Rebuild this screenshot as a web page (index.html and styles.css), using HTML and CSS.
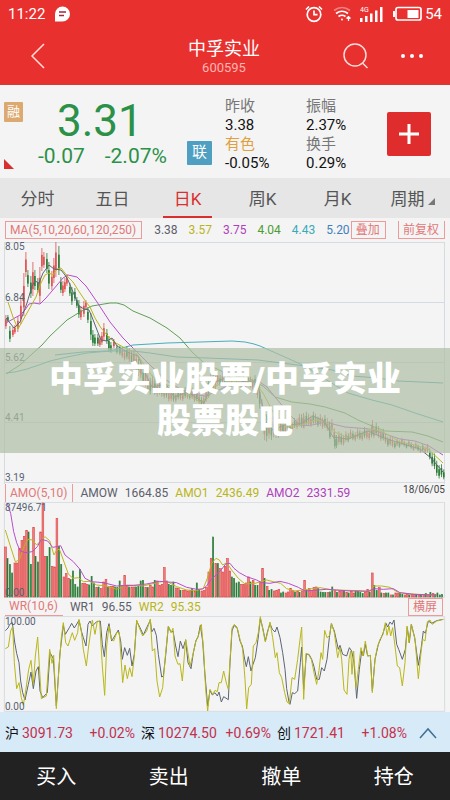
FILE: index.html
```html
<!DOCTYPE html>
<html lang="zh-CN">
<head>
<meta charset="utf-8">
<meta name="viewport" content="width=device-width, initial-scale=1">
<title>中孚实业 600595</title>
<link rel="stylesheet" href="styles.css">
</head>
<body>
<header class="top">
  <div class="status">
    <span>11:22</span>
    <svg class="chat" width="17" height="16" viewBox="0 0 17 16"><path d="M1 15.500V8A7.500 7.500 0 1 1 8.500 15.500Z" fill="#fff"/><path d="M5 6h7M5 9.500h5" stroke="#a02838" stroke-width="1.600"/></svg>
    <svg class="alarm" width="18" height="18" viewBox="0 0 18 18" fill="none" stroke="#fff" stroke-width="1.700"><circle cx="9" cy="9.500" r="6.800"/><path d="M9 5.500v4.200h3.500M1 4.500 4 1.500M17 4.500 14 1.500"/></svg>
    <svg class="wifi" width="19" height="16" viewBox="0 0 19 16" fill="none" stroke="#fff" stroke-width="1.700"><path d="M1 4.500Q9 -1.500 17 4.500" opacity=".4"/><path d="M3 7.500q6-4.500 12 0M5.500 10.500q3.500-2.500 7 0"/><circle cx="9" cy="13.500" r="1" fill="#fff" stroke="none"/><path d="M15.500 15v-4M13.500 12.500l2-2 2 2" stroke-width="1.200"/></svg>
    <svg class="signal" width="23" height="18" viewBox="0 0 23 18" fill="#fff"><path d="M0 13h2.500v4H0zM5 11h2.500v6H5zM10 8.500h2.500V17H10zM15 5.500h2.500V17H15zM20 2h2.500v15H20z"/><text x="0" y="7" font-size="7">4G</text></svg>
    <svg class="battery" width="29" height="16" viewBox="0 0 29 16"><rect x="3" y="1.500" width="25" height="12.500" rx="2" fill="none" stroke="#fff" stroke-width="1.700"/><path d="M0 5h2v6H0zM14.500 4h11v8h-11z" fill="#fff"/></svg>
    <span>54</span>
  </div>
  <nav class="nav">
    <button class="icon" aria-label="返回"><svg width="16" height="26" viewBox="0 0 16 26"><path d="M14 1 2 13l12 12"/></svg></button>
    <div class="title"><h1>中孚实业</h1><p>600595</p></div>
    <button class="icon" aria-label="搜索"><svg width="28" height="28" viewBox="0 0 28 28"><circle cx="13" cy="13" r="11"/><path d="m20.500 21 5 5"/></svg></button>
    <button class="icon" aria-label="更多"><svg width="24" height="6" viewBox="0 0 24 6"><g fill="#fff" stroke="none"><circle cx="3" cy="3" r="2"/><circle cx="12" cy="3" r="2"/><circle cx="21" cy="3" r="2"/></g></svg></button>
  </nav>
</header>

<section class="quote">
  <div class="marks"><span class="rong">融</span><i class="corner"></i></div>
  <div class="price"><strong>3.31</strong><div><span>-0.07</span><span>-2.07%</span></div></div>
  <span class="lian">联</span>
  <dl class="facts"><dt>昨收</dt><dd>3.38</dd><dt class="sector">有色</dt><dd>-0.05%</dd></dl>
  <dl class="facts"><dt>振幅</dt><dd>2.37%</dd><dt>换手</dt><dd>0.29%</dd></dl>
  <button class="add" aria-label="添加自选"><svg width="22" height="22" viewBox="0 0 22 22"><path d="M11 1v20M1 11h20" stroke="#fff" stroke-width="3"/></svg></button>
</section>

<nav class="tabs">
  <button>分时</button><button>五日</button><button class="active">日K</button><button>周K</button><button>月K</button><button>周期<i></i></button>
</nav>

<main>
  <div class="legend ma">
    <button class="tag">MA(5,10,20,60,120,250)</button>
    <div class="averages"><span>3.38</span><span class="yellow">3.57</span><span class="purple">3.75</span><span class="green">4.04</span><span class="cyan">4.43</span><span class="blue">5.20</span></div>
    <button class="tag">叠加</button>
    <button class="tag right open">前复权</button>
  </div>
  <div class="kline">
    <svg viewBox="0 242 450 242" fill="none">
      <path class="frame" d="M4.500 242.500H444.500M4.500 302.500H444.500M4.500 362.500H444.500M4.500 422.500H444.500M4.500 482.500H444.500M4.500 242V484M444.500 242V484"/>
      <g id="candles"></g>
      <path class="l-blue" d="M55 355 83 352 107 351 133 351 150 353 177 357 207 358 258 360 305 366 332 370 352 376 378 378 398 381 443 383"/>
      <path class="l-cyan" d="M6 373 15 372 27 369 39 365 50 361 67 357 87 353 110 351 122 348 133 345 167 343 200 342 232 341 245 342 254 344 260 346 278 354 305 366 325 379 348 393 372 400 392 405 415 413 443 422"/>
      <path class="l-green" d="M6 374 20 365 32 354 42 345 50 336 67 320 80 312 92 306 104 304 110 303 117 303 124 305 133 311 150 318 167 328 180 338 193 353 203 362 213 367 225 373 250 379 263 386 275 397 292 402 310 404 325 407 345 413 358 420 372 426 385 431 412 432 428 436 443 442"/>
      <path class="l-purple" d="M6 323 20 315 25 310 29 304 34 303 40 304 46 298 52 291 63 278 68 275 77 277 86 286 97 302 110 322 123 338 137 352 152 367 166 380 180 389 192 394 205 396 215 392 225 387 245 381 258 381 267 387 275 397 291 416 301 426 312 425 325 422 345 427 370 429 385 434 400 439 415 441 429 446 443 455"/>
      <path class="l-yellow" d="M8 302 13 317 18 329 27 313 36 297 41 283 45 275 49 273 53 275 57 269 61 268 68 277 73 282 78 290 82 296 86 302 90 307 95 318 101 328 107 335 114 342 125 348 137 354 145 366 152 376 160 382 180 390 200 402 208 398 215 386 230 381 253 381 263 393 272 410 280 423 287 427 302 425 315 420 326 422 335 432 348 438 360 435 372 429 383 432 400 442 415 445 428 449 443 463"/>
      <path class="l-dark" d="M6 318 14 328 20 322 27 303 32 286 35 281 39 283 43 273 49 265 54 269 61 270 65 275 68 280 73 292 79 306 84 309 89 310 92 317 97 330 101 340 107 341 112 338 117 346 127 352 138 356 146 375 152 387 166 384 174 397 188 392 204 403 213 383 228 377 245 382 257 382 263 408 272 430 285 425 300 424 313 416 324 421 333 437 348 439 368 431 384 438 400 443 420 449 431 458 443 472"/>
      <g class="scale"><text x="5" y="250">8.05</text><text x="5" y="301">6.84</text><text x="5" y="361">5.62</text><text x="5" y="421">4.41</text><text x="5" y="481">3.19</text></g>
    </svg>
    <div class="banner">中孚实业股票/中孚实业<br>股票股吧</div>
  </div>

  <div class="legend">
    <button class="tag sides">AMO(5,10)</button>
    <span>AMOW</span><span>1664.85</span><span class="yellow">AMO1</span><span class="yellow">2436.49</span><span class="purple">AMO2</span><span class="purple">2331.59</span>
    <time class="right">18/06/05</time>
  </div>
  <svg viewBox="0 66 1350 287" fill="none" class="triple">
    <path class="frame" d="M13 67H1334M13 67V352M1334 67V352M13 352H1334"/>
    <g id="volume"></g>
    <path class="l-yellow" d="M16 150 30 195 46 245 58 240 72 200 84 178 97 180 110 195 124 180 135 170 149 182 162 225 169 212 178 207 190 240 205 282 219 295 235 293 250 305 270 304 290 315 320 318 350 328 380 315 430 318 478 306 500 304 530 320 560 330 590 332 610 325 622 295 635 250 648 235 658 240 668 255 680 248 695 270 715 295 735 312 765 310 800 300 820 305 842 310 860 326 885 333 960 323 1000 330 1080 332 1110 334 1122 318 1145 318 1170 322 1195 338 1250 343 1310 345"/>
    <path class="l-purple" d="M22 70 32 100 41 155 50 188 60 212 75 218 97 215 112 200 124 178 143 183 158 202 170 200 182 197 195 225 220 245 240 268 255 295 275 305 310 308 350 318 400 316 440 312 478 304 530 308 560 322 590 328 608 327 620 318 632 300 650 283 665 268 677 252 690 250 702 265 718 278 740 290 770 300 785 308 810 310 840 304 865 310 895 322 915 333 980 328 1050 333 1105 334 1122 326 1150 328 1180 326 1200 338 1240 343 1310 345"/>
    <g class="scale"><text x="15" y="94">87496.71</text><text x="15" y="347">0.00</text></g>
  </svg>

  <div class="legend">
    <button class="tag under">WR(10,6)</button>
    <span>WR1</span><span>96.55</span><span class="yellow">WR2</span><span class="yellow">95.35</span>
    <button class="tag right shift">横屏</button>
  </div>
  <svg viewBox="0 60 1350 288" fill="none" class="triple">
    <path class="frame" d="M13 61H1334M13 61V346M1334 61V346M13 346H1334"/>
    <path class="l-dark" d="M16 104 24 96 29 85 37 80 44 138 50 172 57 200 62 255 68 290 75 312 85 265 93 228 100 278 108 225 115 212 120 285 128 305 142 290 150 170 160 188 169 330 180 170 190 88 196 115 208 95 215 82 223 96 237 73 244 105 250 125 258 150 264 85 270 75 277 90 290 77 301 75 307 145 313 182 320 110 327 83 335 135 355 102 362 135 367 190 374 155 382 178 389 157 396 210 403 175 410 75 420 95 430 117 440 95 451 73 455 108 462 97 469 118 475 175 485 243 490 240 497 178 505 92 513 108 519 105 527 150 534 182 541 135 549 158 557 132 564 200 573 218 580 170 588 133 594 123 601 88 608 135 614 225 623 330 630 283 637 297 645 290 652 300 657 288 664 318 671 302 685 311 690 200 696 105 702 88 712 98 720 135 727 150 734 190 739 212 745 182 753 225 759 205 766 185 774 130 781 68 788 95 796 135 803 105 810 83 817 100 825 108 831 93 840 125 848 170 855 220 860 278 867 318 870 325 877 290 884 293 893 285 901 200 905 153 911 280 919 175 927 175 935 190 942 212 950 250 958 250 965 215 973 225 981 190 988 125 994 83 1003 105 1015 160 1020 148 1028 175 1040 180 1048 155 1055 165 1062 200 1070 307 1078 220 1085 165 1090 180 1096 145 1103 180 1111 178 1117 285 1125 190 1135 145 1149 112 1158 82 1163 93 1170 78 1176 85 1182 72 1190 145 1196 160 1207 190 1216 160 1222 95 1228 140 1234 85 1244 125 1255 208 1263 160 1270 105 1276 112 1285 75 1295 82 1310 74 1330 70"/>
    <path class="l-yellow" d="M16 158 25 153 32 105 38 92 43 200 50 278 57 260 64 305 70 328 77 285 86 220 93 193 100 265 106 180 113 123 119 225 124 308 139 300 149 160 156 202 161 178 169 338 177 215 184 125 190 80 197 140 204 150 211 128 217 110 224 133 233 110 237 70 243 98 250 160 259 210 266 150 277 72 285 115 292 75 299 78 307 210 314 298 320 150 327 90 334 130 341 135 351 108 358 110 363 185 368 260 375 207 382 248 389 215 396 242 403 180 410 72 417 93 428 120 440 105 451 69 457 165 464 158 471 255 479 303 488 275 497 170 505 90 513 110 519 97 525 180 534 205 540 203 547 255 557 130 563 165 570 210 578 180 587 138 595 120 604 85 611 165 617 280 623 345 630 280 638 295 645 283 652 287 657 260 664 260 671 225 680 265 685 280 691 178 696 96 703 85 711 93 720 130 728 160 735 250 740 339 746 275 754 265 760 150 768 140 775 110 781 62 788 98 796 138 804 105 810 78 818 125 826 185 831 170 838 230 845 245 854 290 861 318 868 323 876 245 884 250 893 190 901 123 905 93 911 310 918 172 925 175 934 190 943 235 950 265 957 223 963 170 968 190 974 103 981 125 988 120 995 83 1003 110 1013 185 1020 155 1025 190 1032 282 1041 295 1047 190 1052 165 1056 235 1061 165 1068 275 1075 220 1083 155 1089 180 1096 135 1103 180 1111 178 1117 290 1125 190 1131 158 1140 130 1149 115 1156 80 1161 118 1167 90 1172 120 1178 95 1185 150 1192 210 1199 215 1207 270 1215 200 1221 90 1227 140 1234 85 1245 130 1255 248 1263 170 1268 130 1275 135 1282 78 1290 72 1297 85 1310 75 1330 70"/>
    <g class="scale"><text x="15" y="87">100.00</text><text x="15" y="341">0.00</text></g>
  </svg>
</main>

<footer>
  <div class="indices">
    <a href="#sh"><b>沪</b><span>3091.73</span><em>+0.02%</em></a>
    <a href="#sz"><b>深</b><span>10274.50</span><em>+0.69%</em></a>
    <a href="#cy"><b>创</b><span>1721.41</span><em>+1.08%</em></a>
    <button aria-label="展开"><svg width="18" height="12" viewBox="0 0 18 12"><path d="m1 11 8-9 8 9" fill="none" stroke="#3f7194" stroke-width="1.500"/></svg></button>
  </div>
  <div class="actions"><button>买入</button><button>卖出</button><button>撤单</button><button>持仓</button></div>
</footer>
<script src="charts.js"></script>
</body>
</html>
```
FILE: styles.css
```css
* { box-sizing: border-box; }
body {
  margin: 0;
  background: #f4f4f4;
  color: #5b606b;
  font-family: Roboto, "Noto Sans CJK SC", sans-serif;
  font-size: 12px;
}
button { margin: 0; padding: 0; border: 0; background: none; color: inherit; font: inherit; }
h1, p, dl, dd { margin: 0; font-weight: 400; }
i, em { font-style: normal; }
svg { display: block; }
a { color: inherit; text-decoration: none; }

.top { background: #e8302f; color: #fff; border-bottom: 1px solid #d4393b; }
.status { display: flex; align-items: center; height: 28px; padding: 0 8px; font-size: 15px; }
.chat { margin-left: 9px; }
.alarm { margin-left: auto; }
.wifi { margin-left: 10px; }
.signal { margin-left: 8px; }
.battery { margin: 0 3px 0 10px; }
.nav { display: grid; grid-template-columns: 76px 1fr 56px 56px; align-items: center; height: 56px; padding-right: 10px; }
.icon { display: grid; place-items: center; height: 56px; }
.icon svg { fill: none; stroke: #ffdcd8; stroke-width: 1.5; }
.title { padding: 2px 0 0 44px; text-align: center; }
.title h1 { font-size: 18px; line-height: 22px; }
.title p { font-size: 13px; line-height: 16px; color: #ffb5b0; }

.quote { display: flex; align-items: center; height: 93px; padding-left: 4px; }
.marks { display: flex; flex-direction: column; justify-content: space-between; width: 34px; height: 67px; margin-top: 8px; }
.rong { width: 19px; height: 20px; background: #dca970; color: #fff; font-size: 13px; line-height: 19px; text-align: center; border-radius: 1px; }
.corner { border-top: 10px solid transparent; border-left: 10px solid #d8302f; width: 0; }
.price { width: 149px; padding-top: 2px; color: #2b9148; }
.price strong { display: block; padding-left: 19px; font-size: 44px; font-weight: 400; line-height: 46px; }
.price div { display: flex; gap: 20px; font-size: 21px; line-height: 24px; }
.lian { width: 25px; height: 24px; margin: 42px 13px 0 0; background: #4f9fc2; color: #fff; font-size: 15px; line-height: 23px; text-align: center; border-radius: 1px; }
.facts { width: 81px; padding-top: 6px; font-size: 15px; line-height: 19px; }
.facts dt { color: #777; }
.facts .sector { color: #e0a040; }
.facts dd { color: #111; }
.add { display: grid; place-items: center; width: 44px; height: 44px; margin-top: 4px; border-radius: 2px; background: #df2d2d; }

.tabs { display: grid; grid-template-columns: repeat(6, 1fr); height: 40px; background: #e6e6e6; color: #555; font-size: 17px; }
.tabs button { position: relative; padding-bottom: 2px; }
.tabs .active { color: #d9302f; }
.tabs .active::after { content: ""; position: absolute; left: 13px; right: 13px; bottom: 0; height: 2px; background: #d9302f; }
.tabs i { display: inline-block; margin-left: 3px; border-top: 7px solid transparent; border-right: 7px solid #777; }

.legend { display: flex; align-items: center; gap: 7px; height: 18px; padding: 0 5px; white-space: nowrap; }
.ma { height: 24px; gap: 0; }
.averages { display: flex; gap: 11px; margin: 0 1px 0 12px; }
.tag { height: 18px; padding: 0 5px 0 4px; border: 1px solid #ee9a9a; color: #e27878; line-height: 16px; }
.open { border-top: 0; }
.sides { border-width: 0 1px; }
.under { border-width: 0 0 1px; }
.shift { margin-right: 2px; }
.right { margin-left: auto; }
time { align-self: flex-start; color: #444; font-size: 10px; line-height: 12px; }
.yellow { color: #b8b420; }
.purple { color: #ae3fbb; }
.green { color: #4c9c30; }
.cyan { color: #3aa9b9; }
.blue { color: #3f7fc0; }

.kline { position: relative; }
.frame { stroke: #d5dbe0; }
.scale { fill: #566273; font-size: 10px; }
.triple { stroke-width: 3; }
.triple .scale { font-size: 30px; stroke: none; }
.l-dark { stroke: #5c6674; }
.l-yellow { stroke: #b9b719; }
.l-purple { stroke: #b84dcc; }
.l-green { stroke: #5ea052; }
.l-cyan { stroke: #48aebc; }
.l-blue { stroke: #4ea1bb; }
.up { fill: #ef8080; stroke: #e04c4c; }
.down { fill: #287a35; stroke: #287a35; }
#volume { stroke-width: 2; }
#candles { stroke-width: 0; }
#candles .up { fill: #df5050; }
.banner {
  position: absolute; left: 0; right: 0; top: 44%; height: 43%;
  display: grid; align-content: center;
  background: rgba(174, 191, 164, .7); color: #fff;
  font-size: 34px; font-weight: 900; line-height: 42px; text-align: center;
}

.indices { display: flex; align-items: center; height: 40px; padding: 3px 0 0 5px; background: #d7eaf7; color: #c5304b; font-size: 14px; line-height: 20px; }
.indices a { display: flex; align-items: baseline; gap: 3px; width: 136px; padding-right: 6px; }
.indices b { color: #111; font-weight: 400; }
.indices em { margin-left: auto; }
.indices button { margin-left: 6px; }
.actions { display: grid; grid-template-columns: repeat(4, 1fr); height: 48px; background: #222; color: #fff; font-size: 20px; }
```
FILE: charts.js
```js
const NS = "http://www.w3.org/2000/svg";

function bar(parent, x, y, w, h, cls) {
  const r = document.createElementNS(NS, "rect");
  r.setAttribute("x", x);
  r.setAttribute("y", y);
  r.setAttribute("width", w);
  r.setAttribute("height", h);
  r.setAttribute("class", cls);
  parent.appendChild(r);
}

// Turnover per day: bar height, followed by g on falling days.
const turnover = `150 115g 97g 72g 102 102 145 170 182 200 195g 98g 208 122g 105g 195 282 122 122g 148g 92 90 236 152g 98g 60
70 55 52g 78g 38g 30g 82g 40 40 38 36g 62g 42g 28 30g 25 45 53 28g 32 32 30g 28g 48g 35 65 35 30g 30 30 30g 33g 48g 50g 28 28g 35
30 50g 48 35 38 88 48 38g 35g 45g 27 25 20g 20 20 18 20 25g 18 42g 22g 18 20 28 75 115 180g 100 100g 85 75 92 115
78 60g 55g 42g 45g 38 38 42 60 45g 50 35g 35g 45 85 56g 32 20g 22g 18 20 22 12g 15g 12 15 25 20 15g 16 14g 18 50
20g 25 20 28 30 25g 15g 14g 13g 13 15g 30g 20 14g 18 20 20g 14 12g 18 12 18g 18g 14g 10g 14 22 15g 72 35g 20g 28
12g 10 12g 12g 6 6g 12 10 10g 8g 6 7 6g 7 8 8g 6 5g 8 10g 6 14g 10 8g 12g 6g 7g`.split(/\s+/);
const volume = document.getElementById("volume");
const step = 1318 / turnover.length;
turnover.forEach((t, i) => {
  const h = parseInt(t, 10);
  const falling = t.endsWith("g");
  bar(volume, 14 + i * step, 351 - h, falling ? 3 : 5, h, falling ? "down" : "up");
});

// Daily range: x, high, low, rising (1) or falling (0).
const days = [
  [6,315,329,1],[8,315,322,0],[10,326,342,0],[13,327,337,1],[15,325,334,1],[18,316,332,1],[21,298,324,1],[24,273,316,1],
  [26,252,277,1],[28,270,287,0],[31,276,298,0],[33,262,296,1],[35,270,290,0],[38,278,293,0],[40,267,303,1],[42,248,271,1],
  [44,252,268,1],[47,253,273,0],[49,262,289,0],[52,271,290,1],[54,258,283,1],[56,242,277,1],[59,246,275,0],[61,277,293,0],
  [63,281,296,1],[65,278,292,1],[67,274,286,1],[70,283,296,0],[72,287,305,0],[75,288,301,0],[77,297,308,0],[79,300,318,0],
  [81,306,320,1],[84,301,317,1],[86,300,309,1],[88,307,323,0],[91,313,340,0],[93,330,346,0],[95,334,346,0],[98,334,346,0],
  [100,336,347,1],[102,332,345,1],[104,323,340,1],[107,329,344,0],[109,336,352,0],[111,342,353,0],[114,339,348,1],[117,345,354,0]
];
// Typical high and low later on, filled in day by day.
const range = [[120,348,357],[131,348,363],[138,355,373],[148,375,393],[165,384,397],[171,391,403],[181,390,400],[190,387,398],[204,397,408],
  [208,375,397],[218,373,385],[230,378,387],[243,377,386],[255,377,389],[260,383,408],[263,408,440],[275,420,439],[290,422,429],
  [303,414,428],[316,413,424],[332,421,434],[336,433,447],[350,432,441],[367,428,439],[377,425,437],[390,437,447],[405,441,447],
  [427,446,453],[433,452,467],[437,461,476],[441,465,478],[444,469,479]];
let k = 0;
for (let x = 120, n = 0; x < 444; x += 2.33, n++) {
  while (k < range.length - 2 && x > range[k + 1][0]) k++;
  const [a, b] = [range[k], range[k + 1]];
  const f = (x - a[0]) / (b[0] - a[0]);
  const wave = (n * 37 % 11) / 2 - 2.5;
  const high = a[1] + (b[1] - a[1]) * f + wave;
  const low = a[2] + (b[2] - a[2]) * f + wave * 0.7;
  days.push([x, high, low, x > 428 ? 0 : (n * 7 % 5 > 1 ? 1 : 0)]);
}
days.push([303.500, 413, 428, 1], [330, 430, 439, 0], [335, 435, 449, 0], [372.500, 420, 434, 1]);
const candles = document.getElementById("candles");
days.forEach(([x, high, low, up]) => {
  const h = low - high;
  const cls = up ? "up" : "down";
  bar(candles, x - 0.5, high, 0.8, h, cls);
  bar(candles, x - 0.9, high + h * 0.3, 1.6, h * 0.5, cls);
});
```
